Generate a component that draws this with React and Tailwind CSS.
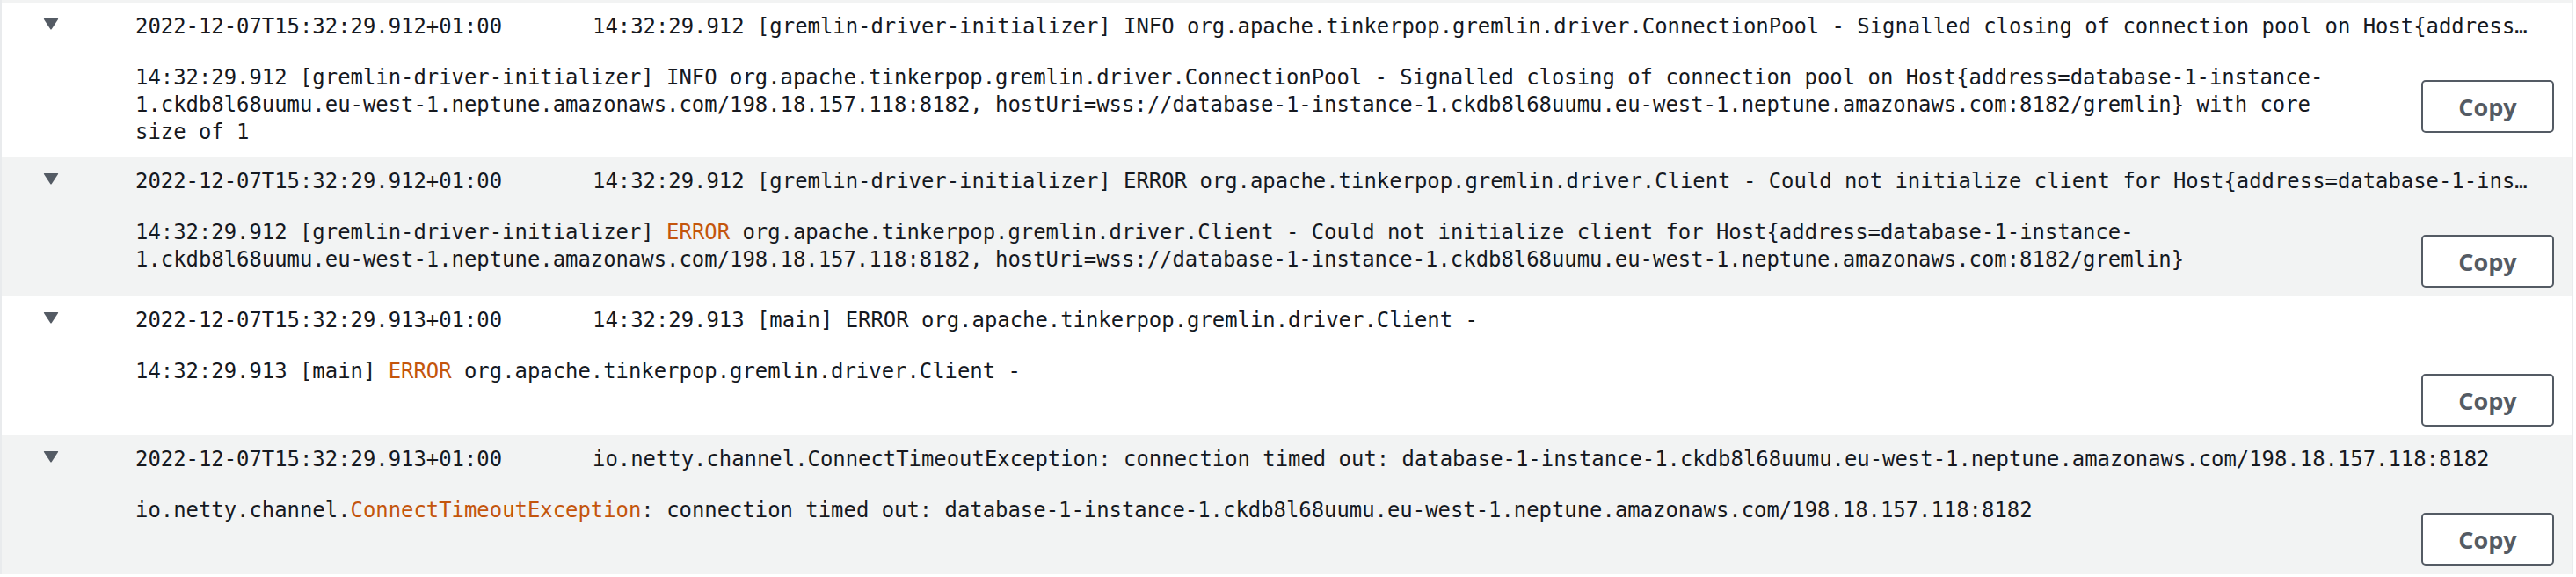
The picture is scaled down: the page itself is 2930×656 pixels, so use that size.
import React from "react";

const mono = { fontFamily: '"DejaVu Sans Mono", "Liberation Mono", monospace' };

function Caret() {
  return (
    <svg width="18" height="14" viewBox="0 0 18 14" className="block">
      <path d="M1.5 1 H16.5 Q17.6 1 17 2 L9.8 13 Q9 14 8.2 13 L1 2 Q0.4 1 1.5 1 Z" fill="#545b64" />
    </svg>
  );
}

function Row({ bg, ts, msg, children }) {
  return (
    <div className={`flex flex-col pt-[12px] pb-[10px] ${bg}`}>
      <div className="flex h-[31px] leading-[31px] text-[23.9px] text-[#16191f]" style={mono}>
        <div className="w-[152px] shrink-0 pl-[47px] pt-[5px]">
          <Caret />
        </div>
        <div className="w-[520px] shrink-0 whitespace-nowrap">{ts}</div>
        <div className="flex-1 min-w-0 truncate pr-[43px]">{msg}</div>
      </div>
      <div className="mt-[27px] flex pl-[152px] pr-[20px]">
        <div
          className="w-[2510px] shrink-0 pb-[3px] leading-[31px] text-[23.9px] text-[#16191f] break-words"
          style={mono}
        >
          {children}
        </div>
        <div className="flex-1" />
        <button
          className="mt-[18px] h-[60px] w-[151px] shrink-0 rounded-[5px] border-2 border-[#545b64] bg-white text-[27px] leading-none font-bold text-[#545b64]"
          style={{ fontFamily: '"Open Sans", "Noto Sans", sans-serif' }}
        >
          Copy
        </button>
      </div>
    </div>
  );
}

const Err = ({ children }) => <span className="text-[#c4550c]">{children}</span>;

export default function App() {
  return (
    <div className="w-[2930px] h-[656px] bg-white">
      <div className="w-[2927px] border-x-2 border-[#e9ebed]">
        <div className="h-[3px] bg-[#f2f3f3]" />
        <Row
          bg="bg-white"
          ts="2022-12-07T15:32:29.912+01:00"
          msg="14:32:29.912 [gremlin-driver-initializer] INFO org.apache.tinkerpop.gremlin.driver.ConnectionPool - Signalled closing of connection pool on Host{address=database-1-instance-1.ckdb8l68uumu.eu-west-1.neptune.amazonaws.com/198.18.157.118:8182, hostUri=wss://database-1-instance-1.ckdb8l68uumu.eu-west-1.neptune.amazonaws.com:8182/gremlin} with core size of 1"
        >
          14:32:29.912 [gremlin-driver-initializer] INFO org.apache.tinkerpop.gremlin.driver.ConnectionPool - Signalled closing of connection pool on Host{"{"}address=database-1-instance-<wbr />1.ckdb8l68uumu.eu-west-1.neptune.amazonaws.com/198.18.157.118:8182, hostUri=wss://database-1-instance-1.ckdb8l68uumu.eu-west-1.neptune.amazonaws.com:8182/gremlin{"}"} with core size of 1
        </Row>
        <Row
          bg="bg-[#f2f3f3]"
          ts="2022-12-07T15:32:29.912+01:00"
          msg="14:32:29.912 [gremlin-driver-initializer] ERROR org.apache.tinkerpop.gremlin.driver.Client - Could not initialize client for Host{address=database-1-instance-1.ckdb8l68uumu.eu-west-1.neptune.amazonaws.com/198.18.157.118:8182, hostUri=wss://database-1-instance-1.ckdb8l68uumu.eu-west-1.neptune.amazonaws.com:8182/gremlin}"
        >
          14:32:29.912 [gremlin-driver-initializer] <Err>ERROR</Err> org.apache.tinkerpop.gremlin.driver.Client - Could not initialize client for Host{"{"}address=database-1-instance-<wbr />1.ckdb8l68uumu.eu-west-1.neptune.amazonaws.com/198.18.157.118:8182, hostUri=wss://database-1-instance-1.ckdb8l68uumu.eu-west-1.neptune.amazonaws.com:8182/gremlin{"}"}
        </Row>
        <Row
          bg="bg-white"
          ts="2022-12-07T15:32:29.913+01:00"
          msg="14:32:29.913 [main] ERROR org.apache.tinkerpop.gremlin.driver.Client -"
        >
          14:32:29.913 [main] <Err>ERROR</Err> org.apache.tinkerpop.gremlin.driver.Client -
        </Row>
        <Row
          bg="bg-[#f2f3f3]"
          ts="2022-12-07T15:32:29.913+01:00"
          msg="io.netty.channel.ConnectTimeoutException: connection timed out: database-1-instance-1.ckdb8l68uumu.eu-west-1.neptune.amazonaws.com/198.18.157.118:8182"
        >
          io.netty.channel.<Err>ConnectTimeoutException</Err>: connection timed out: database-1-instance-1.ckdb8l68uumu.eu-west-1.neptune.amazonaws.com/198.18.157.118:8182
        </Row>
      </div>
    </div>
  );
}
